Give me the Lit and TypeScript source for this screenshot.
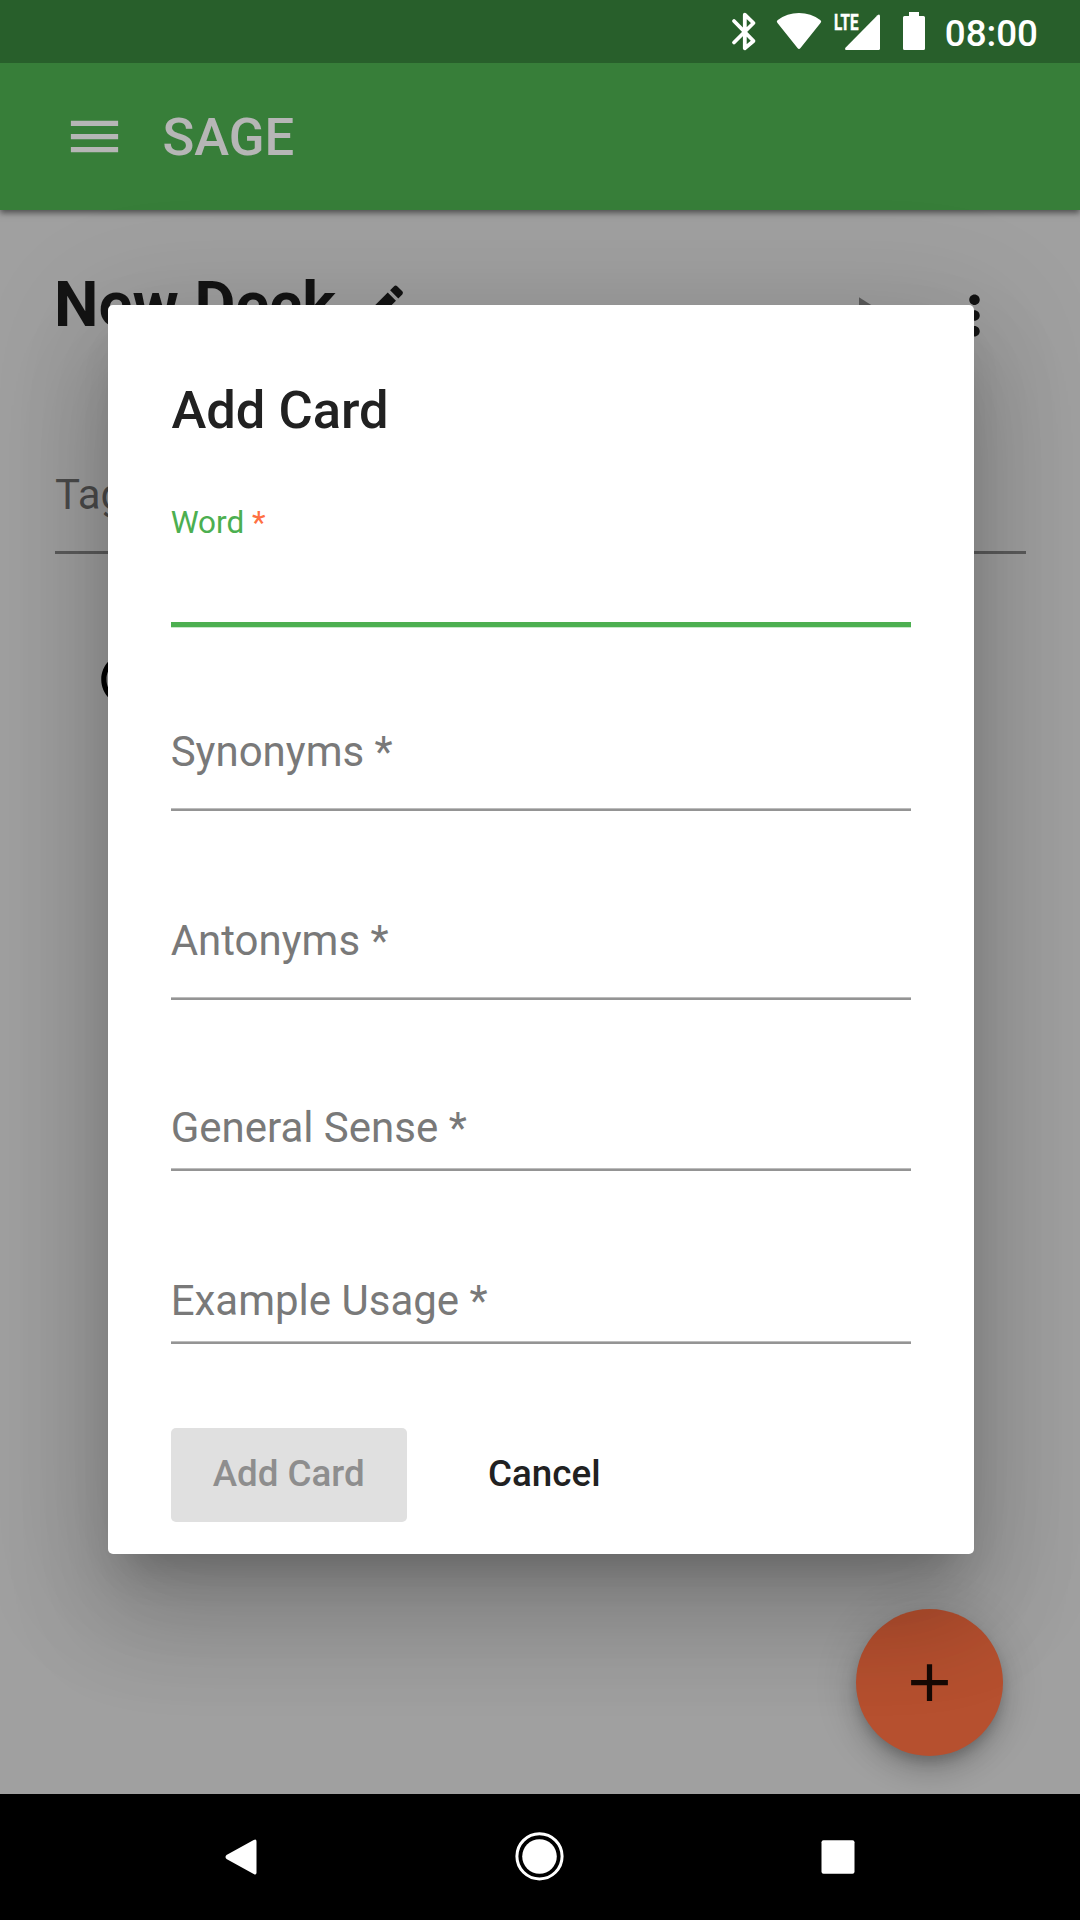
import { LitElement, html, css, svg } from "lit";
import { customElement, property } from "lit/decorators.js";

const paths: Record<string, string> = {
  menu: "M3 18h18v-2H3v2zm0-5h18v-2H3v2zm0-7v2h18V6H3z",
  edit: "M3 17.25V21h3.75L17.81 9.94l-3.75-3.75L3 17.25zM20.71 7.04c.39-.39.39-1.02 0-1.41l-2.34-2.34c-.39-.39-1.02-.39-1.41 0l-1.83 1.83 3.75 3.75 1.83-1.83z",
  play: "M8 5v14l11-7z",
  more: "M12 8c1.1 0 2-.9 2-2s-.9-2-2-2-2 .9-2 2 .9 2 2 2zm0 2c-1.1 0-2 .9-2 2s.9 2 2 2 2-.9 2-2-.9-2-2-2zm0 6c-1.1 0-2 .9-2 2s.9 2 2 2 2-.9 2-2-.9-2-2-2z",
  addCircle:
    "M13 7h-2v4H7v2h4v4h2v-4h4v-2h-4V7zm-1-5C6.48 2 2 6.48 2 12s4.48 10 10 10 10-4.48 10-10S17.52 2 12 2zm0 18c-4.41 0-8-3.59-8-8s3.59-8 8-8 8 3.59 8 8-3.59 8-8 8z",
  add: "M19 13h-6v6h-2v-6H5v-2h6V5h2v6h6v2z",
};

@customElement("md-icon")
export class MdIcon extends LitElement {
  @property() name = "";
  static styles = css`
    :host { display: block; width: 63px; height: 63px; flex: none; }
    .glyph { display: block; width: 100%; height: 100%; fill: currentColor; }
  `;
  render() {
    return html`<svg class="glyph" viewBox="0 0 24 24">${svg`<path d=${paths[this.name]}></path>`}</svg>`;
  }
}

@customElement("status-bar")
export class StatusBar extends LitElement {
  static styles = css`
    :host {
      display: flex; justify-content: flex-end; align-items: center; box-sizing: border-box;
      height: 63px; padding-right: 42px; background: #285f2b; color: #fff;
      font-family: Roboto, sans-serif;
    }
    .icons { display: block; width: 216px; height: 63px; fill: #fff; }
    .lte { font: 700 22.5px Roboto, sans-serif; stroke: #fff; stroke-width: 0.5px; }
    .clock { font-size: 36.75px; font-weight: 500; line-height: 63px; padding-top: 3px; }
  `;
  render() {
    return html`
      <svg class="icons" viewBox="728 0 216 63">
        <path d="M733 21L752.5 41L743.8 48.3V14.7L752.5 23L733 42.5" fill="none" stroke="#fff"
          stroke-width="3.8" stroke-linejoin="round" stroke-linecap="round"></path>
        <path d="M776.3 22.8Q775 21 776.8 20Q786 13 798 13T819.200 20Q821 21 819.700 22.800L799.5 48Q798 49.800 796.500 48Z"></path>
        <text class="lte" x="833" y="30" textLength="24.500" lengthAdjust="spacingAndGlyphs">LTE</text>
        <path d="M876.500 15.200Q879 13.500 879 16.500V48.500Q879 50 877.500 50H845.500Q843 50 844.700 47.500Z"></path>
        <path d="M908 12h10v4h4.500q1.500 0 1.500 1.500v31q0 1.500-1.500 1.500h-19q-1.500 0-1.500-1.500v-31q0-1.500 1.500-1.500h4.500z"></path>
      </svg>
      <span class="clock">08:00</span>
    `;
  }
}

@customElement("nav-bar")
export class NavBar extends LitElement {
  static styles = css`
    :host { display: block; height: 126px; background: #000; }
    .keys { display: block; width: 1080px; height: 126px; fill: #fff; }
  `;
  render() {
    return html`
      <svg class="keys" viewBox="0 0 1080 126">
        <path d="M226.500 61L253.700 46Q256.500 44.500 256.500 47.500V78.500Q256.500 81.500 253.700 80L226.500 65Q224.500 63 226.500 61Z"></path>
        <circle cx="539.500" cy="62.300" r="22.600" fill="none" stroke="#fff" stroke-width="3"></circle>
        <circle cx="539.500" cy="62.500" r="17.300"></circle>
        <rect x="821.500" y="46.300" width="33" height="33.500" rx="2"></rect>
      </svg>
    `;
  }
}

@customElement("form-field")
export class FormField extends LitElement {
  @property() label = "";
  @property({ type: Boolean, reflect: true }) focused = false;
  @property({ type: Boolean, reflect: true }) multiline = false;
  static styles = css`
    :host { display: flex; flex-direction: column; gap: 16px; color: #797979; font-family: Roboto, sans-serif; }
    :host([multiline]) { gap: 32px; }
    .label { font-size: 42px; line-height: 48px; white-space: nowrap; }
    .rule { height: 3px; background: linear-gradient(#bcbcbc 1px, #949494 1px); }
    :host([focused]) { color: #4caf50; gap: 78px; }
    :host([focused]) .label { font-size: 31.5px; line-height: 42px; }
    :host([focused]) .rule { height: 6px; background: linear-gradient(#4caf50 5px, #c9e7cb 5px); }
    :host([focused]) .star { color: #ff7043; }
  `;
  render() {
    return html`
      <div class="label">${this.label} <span class="star">*</span></div>
      <div class="rule"></div>
    `;
  }
}

@customElement("app-root")
export class AppRoot extends LitElement {
  static styles = css`
    :host {
      display: flex; flex-direction: column; position: relative; overflow: hidden;
      width: 1080px; height: 1920px; background: #e0e0e0; font-family: Roboto, sans-serif;
    }
    status-bar, nav-bar { flex: none; position: relative; z-index: 1; }
    .app { flex: 1; display: flex; flex-direction: column; position: relative; color: rgba(0, 0, 0, 0.87); }
    .toolbar {
      display: flex; align-items: center; height: 147px; padding-left: 63px; gap: 36.500px;
      box-sizing: border-box; background: #4eb151; color: #fff;
      box-shadow: 0 3px 6px rgba(0, 0, 0, 0.5);
    }
    .brand { font-size: 52.5px; font-weight: 500; }
    .deck { display: flex; flex-direction: column; padding: 58px 54px 0 55px; }
    .head { display: flex; align-items: center; height: 74px; }
    .name { font-size: 63px; font-weight: 700; line-height: 74px; width: 303px; margin-left: -1px; white-space: nowrap; }
    .pencil { width: 52.5px; height: 52.5px; }
    .play { margin: 21px 42px 0 auto; color: rgba(0, 0, 0, 0.42); }
    .more { margin: 21px 20px 0 0; }
    .tags { margin-top: 129px; font-size: 42px; line-height: 48px; color: rgba(0, 0, 0, 0.54); }
    .line { height: 3px; margin-top: 32px; background: rgba(0, 0, 0, 0.42); }
    .new { margin: 94px 0 0 41.400px; color: #000; }
    .fab {
      position: absolute; left: 855.500px; bottom: 38px; width: 147px; height: 147px; border-radius: 50%;
      display: flex; align-items: center; justify-content: center; background: #ff7043;
      box-shadow: 0 7.900px 13.100px -2.600px rgba(0, 0, 0, 0.2), 0 15.750px 26.250px 0 rgba(0, 0, 0, 0.14),
        0 2.600px 47.250px 0 rgba(0, 0, 0, 0.12);
    }
    .scrim {
      position: absolute; inset: 0; display: flex; align-items: flex-start; justify-content: center;
      background: rgba(0, 0, 0, 0.288); overflow: hidden; box-sizing: border-box; padding-top: 241.500px;
    }
    .dialog {
      box-sizing: border-box; width: 866.250px; height: 1249.500px; padding: 63.500px 63px 0; margin-left: 1.500px;
      border-radius: 5px; background: #fff; display: flex; flex-direction: column;
      box-shadow: 0 28.900px 39.400px -18.400px rgba(0, 0, 0, 0.2), 0 63px 99.750px 7.900px rgba(0, 0, 0, 0.14),
        0 23.600px 120.750px 21px rgba(0, 0, 0, 0.12);
    }
    .title { font-size: 52.5px; font-weight: 500; line-height: 84px; color: #212121; padding-left: 0.800px; }
    .word { margin-top: 50px; }
    .synonyms { margin-top: 100px; }
    .antonyms { margin-top: 106px; }
    .sense { margin-top: 104px; }
    .usage { margin-top: 106px; }
    .actions { display: flex; margin-top: 84px; gap: 39.300px; font-size: 36.75px; font-weight: 500; line-height: 92px; }
    .action { padding: 0 42px; height: 94px; border-radius: 5px; color: #212121; }
    .disabled { background: #e0e0e0; color: #8e8e8e; }
  `;
  render() {
    return html`
      <status-bar></status-bar>
      <main class="app">
        <header class="toolbar"><md-icon name="menu"></md-icon><span class="brand">SAGE</span></header>
        <section class="deck">
          <div class="head">
            <span class="name">New Deck</span>
            <md-icon class="pencil" name="edit"></md-icon>
            <md-icon class="play" name="play"></md-icon>
            <md-icon class="more" name="more"></md-icon>
          </div>
          <div class="tags">Tags</div>
          <div class="line"></div>
          <md-icon class="new" name="addCircle"></md-icon>
        </section>
        <div class="fab"><md-icon name="add"></md-icon></div>
        <div class="scrim">
          <div class="dialog">
            <div class="title">Add Card</div>
            <form-field class="word" label="Word" focused></form-field>
            <form-field class="synonyms" label="Synonyms" multiline></form-field>
            <form-field class="antonyms" label="Antonyms" multiline></form-field>
            <form-field class="sense" label="General Sense"></form-field>
            <form-field class="usage" label="Example Usage"></form-field>
            <div class="actions">
              <div class="action disabled">Add Card</div>
              <div class="action">Cancel</div>
            </div>
          </div>
        </div>
      </main>
      <nav-bar></nav-bar>
    `;
  }
}
